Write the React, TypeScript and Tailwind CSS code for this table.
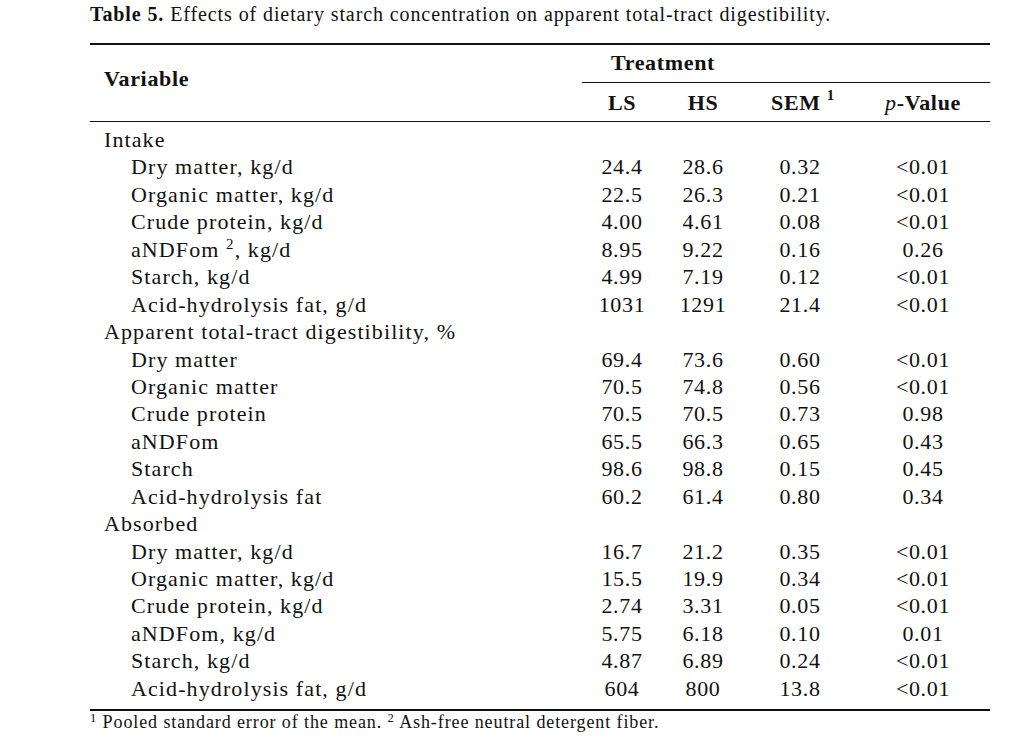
const rows: { label: React.ReactNode; indent: boolean; v?: string[] }[] = [
  { label: "Intake", indent: false },
  { label: "Dry matter, kg/d", indent: true, v: ["24.4", "28.6", "0.32", "<0.01"] },
  { label: "Organic matter, kg/d", indent: true, v: ["22.5", "26.3", "0.21", "<0.01"] },
  { label: "Crude protein, kg/d", indent: true, v: ["4.00", "4.61", "0.08", "<0.01"] },
  {
    label: (
      <>
        aNDFom <sup className="text-[0.68em]">2</sup>, kg/d
      </>
    ),
    indent: true,
    v: ["8.95", "9.22", "0.16", "0.26"],
  },
  { label: "Starch, kg/d", indent: true, v: ["4.99", "7.19", "0.12", "<0.01"] },
  { label: "Acid-hydrolysis fat, g/d", indent: true, v: ["1031", "1291", "21.4", "<0.01"] },
  { label: "Apparent total-tract digestibility, %", indent: false },
  { label: "Dry matter", indent: true, v: ["69.4", "73.6", "0.60", "<0.01"] },
  { label: "Organic matter", indent: true, v: ["70.5", "74.8", "0.56", "<0.01"] },
  { label: "Crude protein", indent: true, v: ["70.5", "70.5", "0.73", "0.98"] },
  { label: "aNDFom", indent: true, v: ["65.5", "66.3", "0.65", "0.43"] },
  { label: "Starch", indent: true, v: ["98.6", "98.8", "0.15", "0.45"] },
  { label: "Acid-hydrolysis fat", indent: true, v: ["60.2", "61.4", "0.80", "0.34"] },
  { label: "Absorbed", indent: false },
  { label: "Dry matter, kg/d", indent: true, v: ["16.7", "21.2", "0.35", "<0.01"] },
  { label: "Organic matter, kg/d", indent: true, v: ["15.5", "19.9", "0.34", "<0.01"] },
  { label: "Crude protein, kg/d", indent: true, v: ["2.74", "3.31", "0.05", "<0.01"] },
  { label: "aNDFom, kg/d", indent: true, v: ["5.75", "6.18", "0.10", "0.01"] },
  { label: "Starch, kg/d", indent: true, v: ["4.87", "6.89", "0.24", "<0.01"] },
  { label: "Acid-hydrolysis fat, g/d", indent: true, v: ["604", "800", "13.8", "<0.01"] },
];

const cols = "grid grid-cols-[492px_80px_82px_112px_134px]";

export default function App() {
  return (
    <div className="w-[1012px] h-[740px] bg-white text-[#111] font-['Liberation_Serif',serif] pl-[90px] pr-[22px]">
      {/* caption */}
      <div className="h-[28px] leading-[28px] text-[20px] tracking-[0.045em] whitespace-nowrap">
        <span className="font-bold">Table 5.</span> Effects of dietary starch concentration on apparent
        total-tract digestibility.
      </div>
      <div className="mt-[15px] border-t-2 border-[#111]" />

      {/* header */}
      <div className={`${cols} grid-rows-[37px_39px] text-[22px] font-bold tracking-[0.03em]`}>
        <div className="row-span-2 flex items-center pl-[14px] pb-[10px]">Variable</div>
        <div className="col-span-2 flex items-center justify-center pb-[2px]">Treatment</div>
        <div className="col-span-2" />
        <div className="col-start-2 col-span-4 grid grid-cols-[80px_82px_112px_134px] border-t border-[#111]">
          <div className="flex items-center justify-center">LS</div>
          <div className="flex items-center justify-center">HS</div>
          <div className="flex items-center justify-center pl-[6px]">
            SEM<sup className="ml-[6px] text-[0.68em]">1</sup>
          </div>
          <div className="flex items-center justify-center">
            <span className="italic font-normal">p</span>-Value
          </div>
        </div>
      </div>
      <div className="border-t border-[#111]" />

      {/* body */}
      <div className="pt-[4px] pb-[7px] text-[22px] tracking-[0.05em]">
        {rows.map((r, i) => (
          <div key={i} className={`${cols} h-[27.45px] leading-[27.45px] whitespace-nowrap`}>
            <div className={r.indent ? "pl-[41px]" : "pl-[14px]"}>{r.label}</div>
            {r.v &&
              r.v.map((x, j) => (
                <div key={j} className="text-center tracking-[0.03em]">
                  {x}
                </div>
              ))}
          </div>
        ))}
      </div>
      <div className="border-t-2 border-[#111]" />

      {/* footnote */}
      <div className="h-[22px] leading-[22px] text-[18px] tracking-[0.05em] whitespace-nowrap">
        <sup className="text-[0.7em]">1</sup> Pooled standard error of the mean.{" "}
        <sup className="text-[0.7em]">2</sup> Ash-free neutral detergent fiber.
      </div>
    </div>
  );
}
